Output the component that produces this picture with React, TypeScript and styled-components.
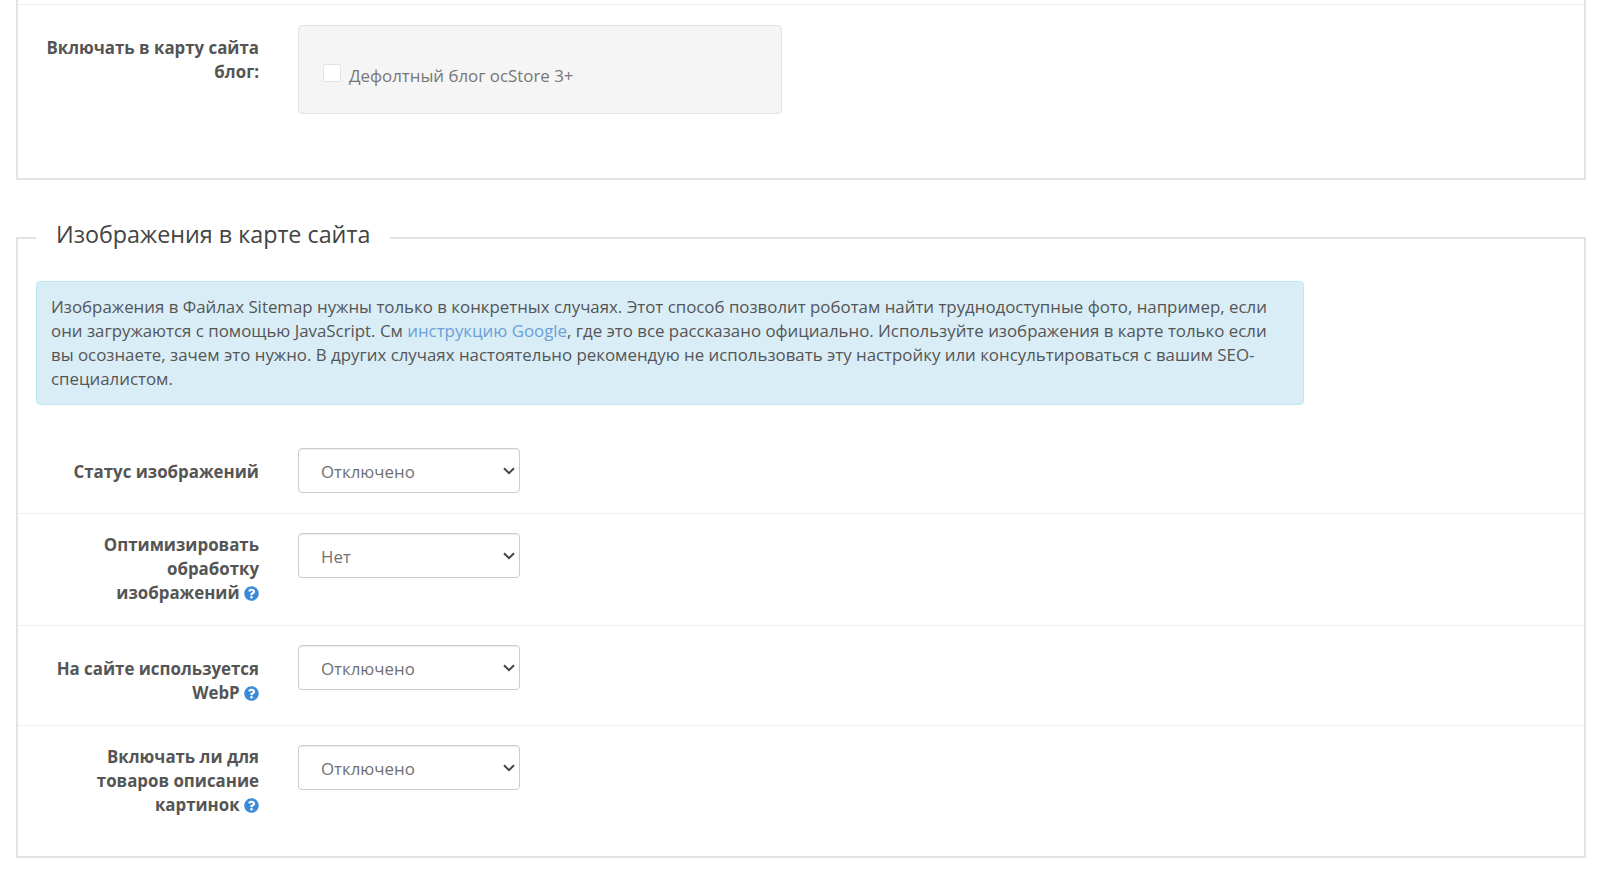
import React from 'react'
import styled, { createGlobalStyle } from 'styled-components'
import { FaQuestionCircle } from 'react-icons/fa'

const GlobalStyle = createGlobalStyle`
  html, body {
    margin: 0;
    background: #fff;
    color: #666;
    font-family: "Open Sans", "Noto Sans", sans-serif;
    font-size: 16.85px;
    line-height: 24px;
    overflow: hidden;
  }
  * {
    box-sizing: border-box;
  }
`

function Help() {
  return (
    <HelpIcon>
      <FaQuestionCircle />
    </HelpIcon>
  )
}

const SELECTS = [
  {
    label: <>Статус изображений</>,
    value: 'Отключено',
    lines: 1,
  },
  {
    label: <>Оптимизировать обработку изображений <Help /></>,
    value: 'Нет',
    lines: 3,
  },
  {
    label: <>На сайте используется WebP <Help /></>,
    value: 'Отключено',
    lines: 2,
  },
  {
    label: <>Включать ли для товаров описание картинок <Help /></>,
    value: 'Отключено',
    lines: 3,
  },
]

export default function App() {
  return (
    <>
      <GlobalStyle />
      <Page>
        <TopBox>
          <Row>
            <Label>Включать в карту сайта блог:</Label>
            <Field>
              <Well>
                <CheckLabel>
                  <input type="checkbox" />
                  Дефолтный блог ocStore 3+
                </CheckLabel>
              </Well>
            </Field>
          </Row>
        </TopBox>

        <Section>
          <Legend>Изображения в карте сайта</Legend>
          <Alert>
            Изображения в Файлах Sitemap нужны только в конкретных случаях. Этот способ позволит роботам найти
            труднодоступные фото, например, если они загружаются с помощью JavaScript. См{' '}
            <a href="#">инструкцию Google</a>, где это все рассказано официально. Используйте изображения в карте только
            если вы осознаете, зачем это нужно. В других случаях настоятельно рекомендую не использовать эту настройку
            или консультироваться с вашим SEO-специалистом.
          </Alert>
          {SELECTS.map((item, i) => (
            <Row key={i}>
              <Label $tight={item.lines === 3}>{item.label}</Label>
              <Field>
                <SelectWrap>
                  <Select defaultValue={item.value}>
                    <option>{item.value}</option>
                    <option>Включено</option>
                  </Select>
                  <Chevron width="12" height="8" viewBox="0 0 12 8">
                    <path d="M1 1.2l5 5 5-5" fill="none" stroke="#444" strokeWidth="2" />
                  </Chevron>
                </SelectWrap>
              </Field>
            </Row>
          ))}
        </Section>
      </Page>
    </>
  )
}

const Page = styled.div`
  height: 869px;
  padding: 0 14px 0 16px;
`
const TopBox = styled.div`
  height: 180px;
  padding-top: 4px;
  border: solid #e3e3e3;
  border-width: 0 2px 2px 2px;
`
const Section = styled.fieldset`
  margin: 36px 0 0;
  min-width: 0;
  padding: 21px 0 19px;
  border: 2px solid #e3e3e3;
  border-radius: 0;
`
const Legend = styled.legend`
  margin-left: 18px;
  padding: 0 20px 8px;
  font-size: 23.3px;
  line-height: 36px;
  color: #444;
`
const Alert = styled.div`
  width: 1268px;
  margin: 0 0 24px 18px;
  padding: 13px 14px;
  background: #d9edf7;
  border: 1px solid #bce8f1;
  border-radius: 4px;
  color: #555;
  a {
    color: #6b9fd8;
    text-decoration: none;
  }
`
const Row = styled.div`
  display: flex;
  padding: 19px 0 20px 25px;
  border-top: 1px solid #efefef;
  ${Alert} + & {
    border-top: 0;
  }
`
const Label = styled.label<{ $tight?: boolean }>`
  flex: 0 0 216px;
  padding-top: ${p => (p.$tight ? '0' : '12px')};
  text-align: right;
  font-weight: 700;
  color: #555;
`
const Field = styled.div`
  margin-left: 39px;
`
const HelpIcon = styled.span`
  display: inline-block;
  vertical-align: -2px;
  color: #3b8ad8;
  font-size: 15px;
  line-height: 15px;
  svg {
    display: block;
  }
`
const Well = styled.div`
  display: flex;
  align-items: center;
  width: 484px;
  height: 89px;
  margin-top: 1px;
  padding: 24px;
  background: #f5f5f5;
  border: 1px solid #e3e3e3;
  border-radius: 4px;
`
const CheckLabel = styled.label`
  display: flex;
  align-items: center;
  gap: 8px;
  padding-top: 12px;
  color: #777;
  input {
    appearance: none;
    width: 18px;
    height: 18px;
    margin: -6px 0 0;
    background: #fff;
    border: 1px solid #e3e3e3;
    border-radius: 2px;
  }
`
const SelectWrap = styled.div`
  position: relative;
  width: 222px;
  height: 45px;
`
const Select = styled.select`
  display: block;
  width: 100%;
  height: 100%;
  padding: 2px 30px 0 22px;
  appearance: none;
  background: #fff;
  border: 1px solid #ccc;
  border-radius: 4px;
  box-shadow: inset 0 1px 1px rgba(0, 0, 0, 0.075);
  color: #707070;
  font-family: "Open Sans", "Noto Sans", sans-serif;
  font-size: 16.85px;
`
const Chevron = styled.svg`
  position: absolute;
  top: 19px;
  right: 5px;
  pointer-events: none;
`
